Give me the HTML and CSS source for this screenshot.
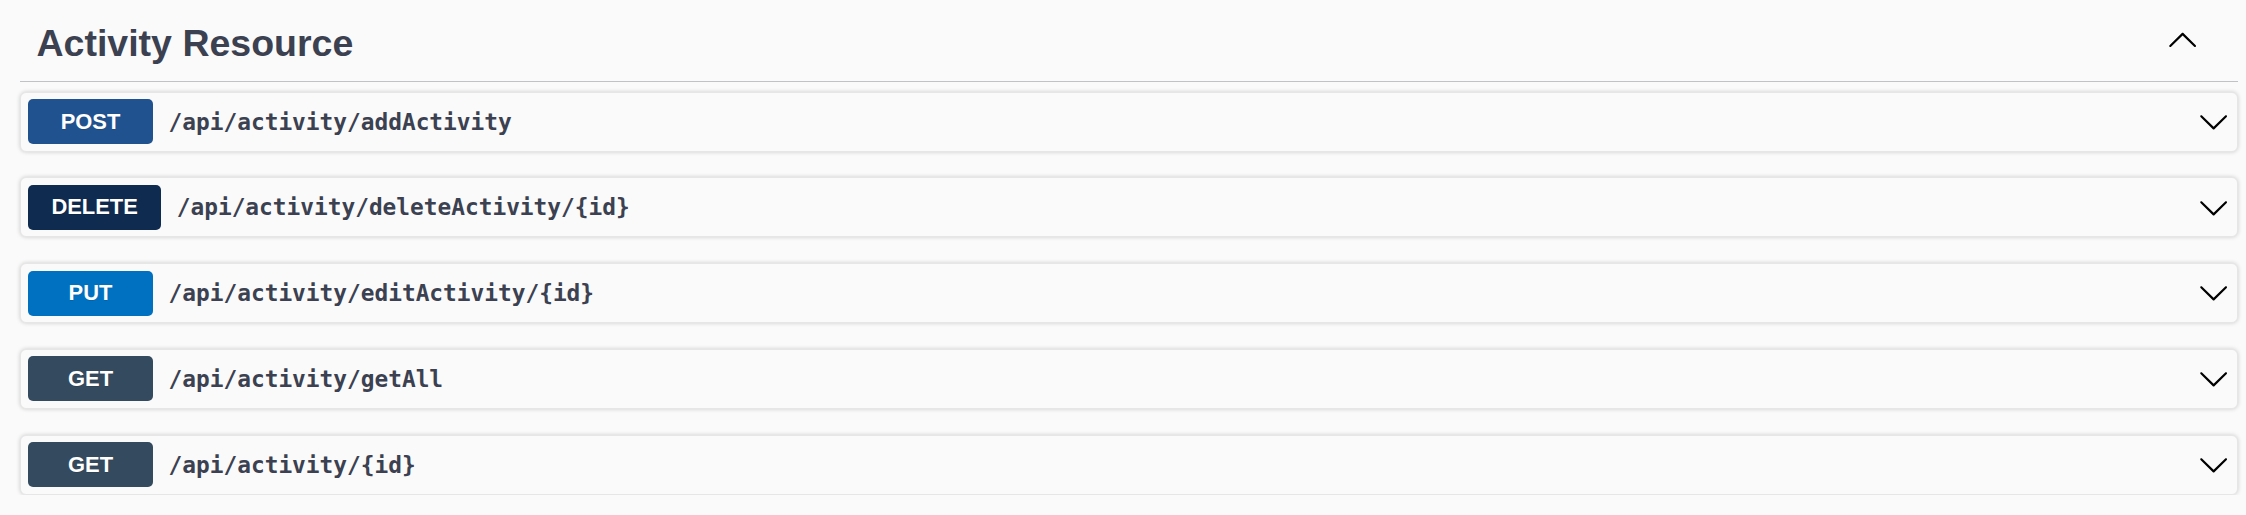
FILE: index.html
```html
<!DOCTYPE html>
<html lang="en">
<head>
<meta charset="utf-8">
<title>Activity Resource</title>
<link rel="stylesheet" href="styles.css">
</head>
<body>
<section class="tag-section">
  <h3 class="tag-header">
    <span class="tag-title">Activity Resource</span>
    <svg class="arrow arrow-up" viewBox="0 0 20 20" aria-hidden="true"><path d="M17.418 6.109c.272-.268.709-.268.979 0s.271.701 0 .969l-7.908 7.83c-.27.268-.707.268-.979 0l-7.908-7.83c-.27-.268-.27-.701 0-.969.271-.268.709-.268.979 0L10 13.25l7.418-7.141z"/></svg>
  </h3>
  <div class="ops">
    <div class="op">
      <span class="method m-post">POST</span>
      <span class="path">/api/activity/addActivity</span>
      <svg class="arrow" viewBox="0 0 20 20" aria-hidden="true"><path d="M17.418 6.109c.272-.268.709-.268.979 0s.271.701 0 .969l-7.908 7.83c-.27.268-.707.268-.979 0l-7.908-7.83c-.27-.268-.27-.701 0-.969.271-.268.709-.268.979 0L10 13.25l7.418-7.141z"/></svg>
    </div>
    <div class="op">
      <span class="method m-delete">DELETE</span>
      <span class="path">/api/activity/deleteActivity/{id}</span>
      <svg class="arrow" viewBox="0 0 20 20" aria-hidden="true"><path d="M17.418 6.109c.272-.268.709-.268.979 0s.271.701 0 .969l-7.908 7.83c-.27.268-.707.268-.979 0l-7.908-7.830c-.27-.268-.27-.701 0-.969.271-.268.709-.268.979 0L10 13.25l7.418-7.141z"/></svg>
    </div>
    <div class="op">
      <span class="method m-put">PUT</span>
      <span class="path">/api/activity/editActivity/{id}</span>
      <svg class="arrow" viewBox="0 0 20 20" aria-hidden="true"><path d="M17.418 6.109c.272-.268.709-.268.979 0s.271.701 0 .969l-7.908 7.83c-.27.268-.707.268-.979 0l-7.908-7.83c-.27-.268-.27-.701 0-.969.271-.268.709-.268.979 0L10 13.25l7.418-7.141z"/></svg>
    </div>
    <div class="op">
      <span class="method m-get">GET</span>
      <span class="path">/api/activity/getAll</span>
      <svg class="arrow" viewBox="0 0 20 20" aria-hidden="true"><path d="M17.418 6.109c.272-.268.709-.268.979 0s.271.701 0 .969l-7.908 7.83c-.27.268-.707.268-.979 0l-7.908-7.83c-.27-.268-.27-.701 0-.969.271-.268.709-.268.979 0L10 13.25l7.418-7.141z"/></svg>
    </div>
    <div class="op">
      <span class="method m-get">GET</span>
      <span class="path">/api/activity/{id}</span>
      <svg class="arrow" viewBox="0 0 20 20" aria-hidden="true"><path d="M17.418 6.109c.272-.268.709-.268.979 0s.271.701 0 .969l-7.908 7.83c-.27.268-.707.268-.979 0l-7.908-7.83c-.27-.268-.27-.701 0-.969.271-.268.709-.268.979 0L10 13.25l7.418-7.141z"/></svg>
    </div>
  </div>
</section>
</body>
</html>
```

FILE: styles.css
```css
html, body {
  margin: 0;
  padding: 0;
  background: #fafafa;
}

body {
  font-family: "Liberation Sans", Arial, sans-serif;
  color: #3b4151;
}

.tag-section {
  margin: 0 8px 0 20px;
}

.tag-header {
  display: flex;
  align-items: center;
  margin: 0;
  padding: 21px 40px 16px 16.5px;
  border-bottom: 1px solid rgba(59, 65, 81, 0.3);
}

.tag-title {
  flex: 1;
  font-size: 37.5px;
  line-height: 44px;
  font-weight: 700;
  color: #3b4151;
}

.arrow {
  width: 31.25px;
  height: 31.25px;
  flex: none;
  fill: #000;
}

.arrow-up {
  transform: rotate(180deg);
  margin-bottom: 4.6px;
}

.ops {
  display: flex;
  flex-direction: column;
  gap: 25.75px;
  padding-top: 9.5px;
}

.op {
  display: flex;
  align-items: center;
  box-sizing: border-box;
  height: 60px;
  padding: 0 7.8px 0 7px;
  background: #fafafa;
  border: 1px solid #e6e6e6;
  border-radius: 6px;
  box-shadow: 0 0 4px rgba(0, 0, 0, 0.19);
}

.method {
  box-sizing: border-box;
  min-width: 125px;
  height: 45px;
  padding: 0 23.4px;
  display: flex;
  align-items: center;
  justify-content: center;
  border-radius: 5px;
  color: #fff;
  font-size: 21.9px;
  font-weight: 700;
  text-shadow: 0 1px 0 rgba(0, 0, 0, 0.1);
}

.m-post { background: #215290; }
.m-delete { background: #0f2b4f; }
.m-put { background: #0070c0; }
.m-get { background: #344a5e; }

.path {
  flex: 1;
  padding: 0 15.6px;
  font-family: "DejaVu Sans Mono", "Liberation Mono", monospace;
  font-size: 22.8px;
  font-weight: 700;
  color: #3b4151;
}
```
